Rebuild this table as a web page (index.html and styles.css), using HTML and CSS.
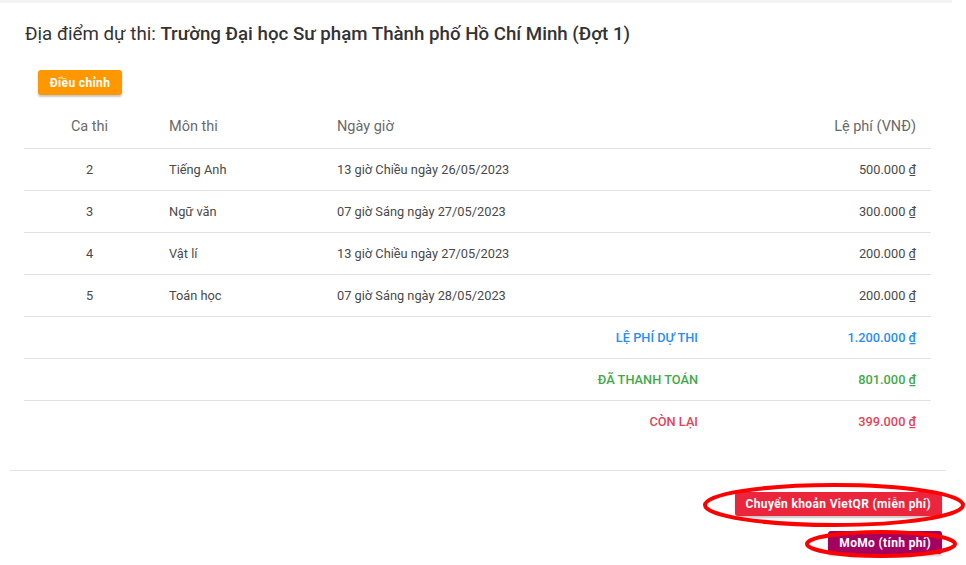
FILE: index.html
```html
<!DOCTYPE html>
<html lang="vi">
<head>
<meta charset="utf-8">
<title>Lệ phí dự thi</title>
<link rel="stylesheet" href="styles.css">
</head>
<body>
<div class="page">
  <div class="topbar"></div>
  <div class="card">
    <h2 class="title">Địa điểm dự thi: <strong>Trường Đại học Sư phạm Thành phố Hồ Chí Minh (Đợt 1)</strong></h2>
    <button class="btn btn-orange">Điều chỉnh</button>
    <table class="fees">
      <thead>
        <tr>
          <th class="c-ca">Ca thi</th>
          <th class="c-mon">Môn thi</th>
          <th class="c-ngay">Ngày giờ</th>
          <th class="c-fee">Lệ phí (VNĐ)</th>
        </tr>
      </thead>
      <tbody>
        <tr><td class="c-ca">2</td><td>Tiếng Anh</td><td>13 giờ Chiều ngày 26/05/2023</td><td class="c-fee">500.000 ₫</td></tr>
        <tr><td class="c-ca">3</td><td>Ngữ văn</td><td>07 giờ Sáng ngày 27/05/2023</td><td class="c-fee">300.000 ₫</td></tr>
        <tr><td class="c-ca">4</td><td>Vật lí</td><td>13 giờ Chiều ngày 27/05/2023</td><td class="c-fee">200.000 ₫</td></tr>
        <tr><td class="c-ca">5</td><td>Toán học</td><td>07 giờ Sáng ngày 28/05/2023</td><td class="c-fee">200.000 ₫</td></tr>
        <tr class="sum blue"><td colspan="3" class="lbl">LỆ PHÍ DỰ THI</td><td class="c-fee">1.200.000 ₫</td></tr>
        <tr class="sum green"><td colspan="3" class="lbl">ĐÃ THANH TOÁN</td><td class="c-fee">801.000 ₫</td></tr>
        <tr class="sum red last"><td colspan="3" class="lbl">CÒN LẠI</td><td class="c-fee">399.000 ₫</td></tr>
      </tbody>
    </table>
  </div>
  <div class="divider"></div>
  <div class="actions">
    <button class="btn btn-vietqr">Chuyển khoản VietQR (miễn phí)</button>
    <button class="btn btn-momo">MoMo (tính phí)</button>
  </div>
  <svg class="marks" width="966" height="565" viewBox="0 0 966 565" aria-hidden="true">
    <ellipse cx="834" cy="505" rx="129" ry="20" fill="none" stroke="#ff0000" stroke-width="4"/>
    <ellipse cx="881" cy="544" rx="74" ry="12" fill="none" stroke="#ff0000" stroke-width="4"/>
  </svg>
</div>
</body>
</html>
```

FILE: styles.css
```css
* { box-sizing: border-box; }
html, body { margin: 0; padding: 0; background: #fff; }
body {
  font-family: Roboto, "Noto Sans", "Liberation Sans", sans-serif;
  color: #444;
  width: 966px;
  height: 565px;
  overflow: hidden;
}
.page { position: relative; width: 966px; height: 565px; }
.topbar { width: 952px; height: 3px; background: #f3f3f3; }
.card { padding: 0 35px 0 24px; width: 955px; }
.title {
  margin: 19px 0 0 1px;
  font-size: 18.7px;
  line-height: 24px;
  font-weight: 400;
  color: #333;
}
.title strong { font-weight: 500; }
.btn {
  font-family: Roboto, "Noto Sans", sans-serif;
  font-weight: 700;
  font-size: 12px;
  letter-spacing: 0.35px;
  color: #fff;
  border: 0;
  border-radius: 3px;
  cursor: pointer;
  box-shadow: 0 2px 2px rgba(0,0,0,0.22);
}
.btn-orange {
  display: block;
  margin: 24px 0 0 14px;
  width: 84px;
  height: 25px;
  background: #ff9800;
  padding: 0;
}
.fees {
  margin-top: 11px;
  width: 907px;
  border-collapse: collapse;
  font-size: 12.8px;
}
.fees th, .fees td {
  height: 42px;
  padding: 0 15px 0 14px;
  text-align: left;
  border-bottom: 1px solid #e2e2e2;
  vertical-align: middle;
}
.fees th { font-weight: 400; font-size: 14.5px; color: #6a6a6a; }
.fees td { color: #4a4a4a; }
.fees .c-ca { width: 131px; text-align: center; padding: 0; }
.fees th.c-mon { width: 168px; }
.fees .c-fee { text-align: right; width: 218px; }
.fees .sum td { font-weight: 500; }
.fees .lbl { text-align: right; }
.fees .blue td { color: #2b8ef0; }
.fees .green td { color: #43a84a; }
.fees .red td { color: #e2445a; }
.fees .last td { border-bottom: 0; }
.divider { margin: 28px 0 0 10px; width: 936px; height: 1px; background: #e3e3e3; }
.actions {
  display: flex;
  flex-direction: column;
  align-items: flex-end;
  gap: 15px;
  width: 942px;
  padding-top: 21px;
}
.btn-vietqr { height: 24px; padding: 0 11px; background: #ea253c; }
.btn-momo { height: 23px; padding: 0 11px; background: #a3005f; }
.marks { position: absolute; left: 0; top: 0; pointer-events: none; }
```
